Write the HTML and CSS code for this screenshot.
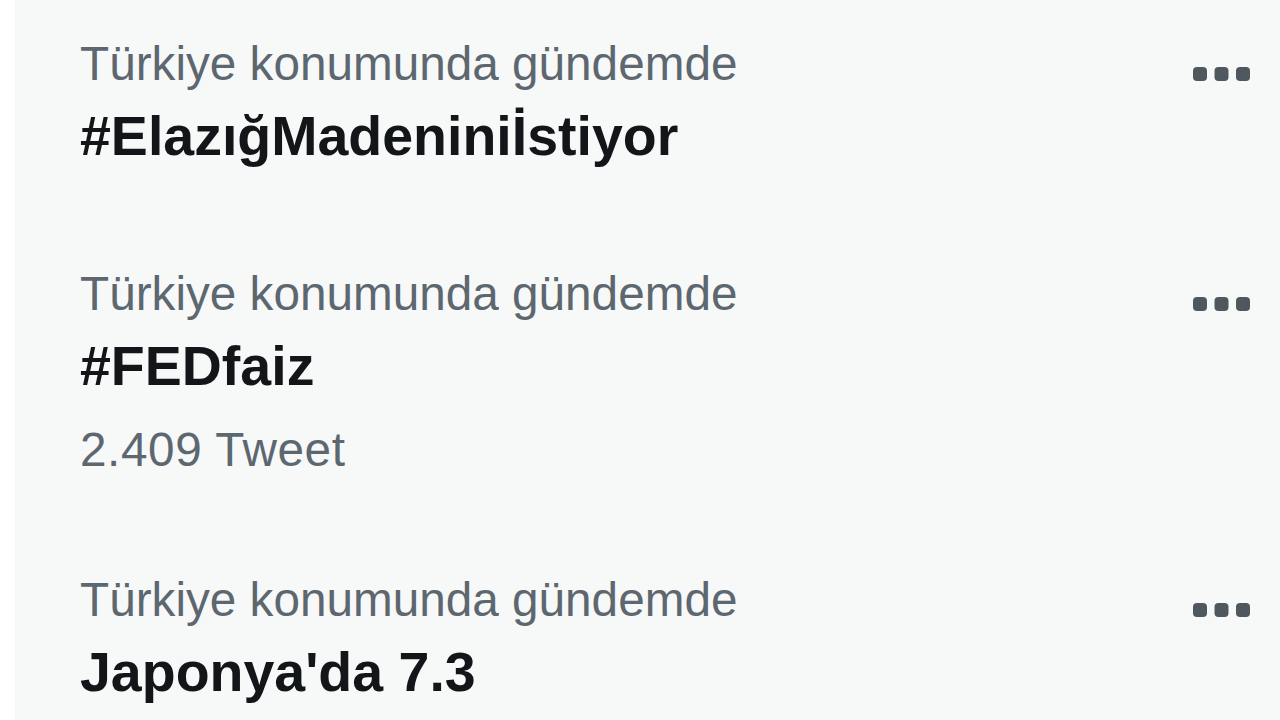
FILE: index.html
```html
<!DOCTYPE html>
<html lang="tr">
<head>
<meta charset="utf-8">
<title>Gündem</title>
<link rel="stylesheet" href="styles.css">
</head>
<body>
<div class="page">
  <div class="panel">
    <div class="trends">
      <div class="trend">
        <div class="trend-body">
          <div class="trend-meta">Türkiye konumunda gündemde</div>
          <div class="trend-name">#ElazığMadeniniİstiyor</div>
        </div>
        <svg class="more" viewBox="0 0 57 14" aria-hidden="true"><rect x="0" y="0" width="14" height="14" rx="4"/><rect x="21.5" y="0" width="14" height="14" rx="4"/><rect x="43" y="0" width="14" height="14" rx="4"/></svg>
      </div>
      <div class="trend">
        <div class="trend-body">
          <div class="trend-meta">Türkiye konumunda gündemde</div>
          <div class="trend-name">#FEDfaiz</div>
          <div class="trend-count">2.409 Tweet</div>
        </div>
        <svg class="more" viewBox="0 0 57 14" aria-hidden="true"><rect x="0" y="0" width="14" height="14" rx="4"/><rect x="21.5" y="0" width="14" height="14" rx="4"/><rect x="43" y="0" width="14" height="14" rx="4"/></svg>
      </div>
      <div class="trend">
        <div class="trend-body">
          <div class="trend-meta">Türkiye konumunda gündemde</div>
          <div class="trend-name">Japonya'da 7.3</div>
        </div>
        <svg class="more" viewBox="0 0 57 14" aria-hidden="true"><rect x="0" y="0" width="14" height="14" rx="4"/><rect x="21.5" y="0" width="14" height="14" rx="4"/><rect x="43" y="0" width="14" height="14" rx="4"/></svg>
      </div>
    </div>
  </div>
</div>
</body>
</html>
```

FILE: styles.css
```css
html, body {
  margin: 0;
  padding: 0;
  background: #ffffff;
}

body {
  font-family: "Liberation Sans", Arial, sans-serif;
  width: 1280px;
  height: 720px;
  overflow: hidden;
}

.page {
  display: flex;
  height: 720px;
  padding-left: 15px;
}

.panel {
  flex: 1;
  background: #f7f8f8;
  overflow: hidden;
}

.trends {
  margin-top: -11px;
  display: flex;
  flex-direction: column;
}

.trend {
  display: flex;
  align-items: flex-start;
  justify-content: space-between;
  padding: 46px 30px 46px 65px;
}

.trend-body {
  display: flex;
  flex-direction: column;
}

.trend-meta {
  font-size: 47.7px;
  line-height: 58px;
  color: #5d676f;
  white-space: nowrap;
}

.trend-name {
  margin-top: 7px;
  font-size: 55.5px;
  line-height: 73px;
  font-weight: 700;
  color: #121619;
  white-space: nowrap;
}

.trend-count {
  margin-top: 18px;
  font-size: 47.7px;
  line-height: 58px;
  color: #5d676f;
  letter-spacing: 0.6px;
  white-space: nowrap;
}

.more {
  width: 57px;
  height: 14px;
  margin-top: 32px;
  fill: #4f585f;
  flex: none;
}
```
